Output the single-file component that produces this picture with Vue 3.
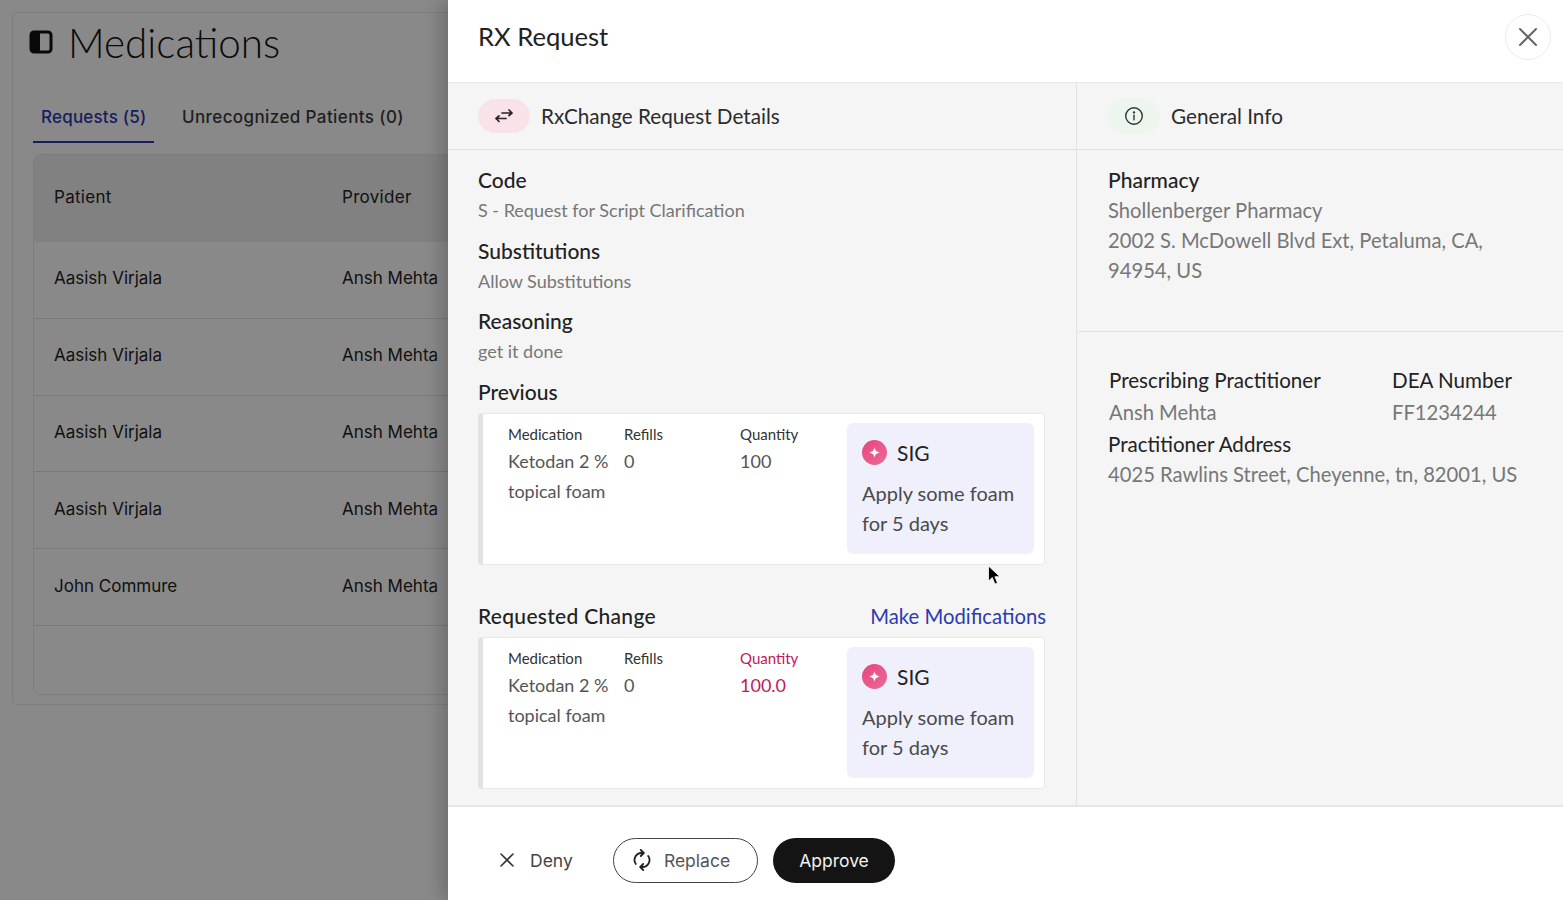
<script setup>
import { ref } from 'vue'

const patients = ref([
  { id: 1, name: 'Aasish Virjala', provider: 'Ansh Mehta' },
  { id: 2, name: 'Aasish Virjala', provider: 'Ansh Mehta' },
  { id: 3, name: 'Aasish Virjala', provider: 'Ansh Mehta' },
  { id: 4, name: 'Aasish Virjala', provider: 'Ansh Mehta' },
  { id: 5, name: 'John Commure', provider: 'Ansh Mehta' }
])

const details = [
  { label: 'Code', value: 'S - Request for Script Clarification' },
  { label: 'Substitutions', value: 'Allow Substitutions' },
  { label: 'Reasoning', value: 'get it done' }
]
</script>

<template>
  <div class="page">
    <div class="med-card">
      <div class="med-title">
        <svg class="panel-icon" width="24" height="24" viewBox="0 0 24 24">
          <rect x="2" y="2" width="20" height="20" rx="3" fill="none" stroke="#111" stroke-width="3" />
          <path d="M3 3h8v18H3z" fill="#111" />
        </svg>
        <h1>Medications</h1>
      </div>
      <div class="tabs">
        <div class="tab active">Requests (5)</div>
        <div class="tab">Unrecognized Patients (0)</div>
      </div>
      <div class="table">
        <div class="row head">
          <div class="col-patient">Patient</div>
          <div>Provider</div>
        </div>
        <div v-for="item in patients" :key="item.id" class="row">
          <div class="col-patient">{{ item.name }}</div>
          <div>{{ item.provider }}</div>
        </div>
        <div class="table-foot"></div>
      </div>
    </div>

    <div class="backdrop"></div>

    <aside class="drawer">
      <header class="drawer-head">
        <h2>RX Request</h2>
        <button class="close">
          <svg width="22" height="22" viewBox="0 0 22 22" fill="none" stroke="#666" stroke-width="2" stroke-linecap="round">
            <path d="M3 3l16 16M19 3L3 19" />
          </svg>
        </button>
      </header>

      <div class="drawer-body">
        <section class="left">
          <div class="sec-head">
            <span class="pill pink">
              <svg width="20" height="16" viewBox="0 0 20 16" fill="none" stroke="#2a2226" stroke-width="1.7" stroke-linecap="round" stroke-linejoin="round">
                <path d="M8 5h10M15 2l3 3-3 2.500M12 10.500H2M5 8l-3 2.500L5 13.500" />
              </svg>
            </span>
            <span>RxChange Request Details</span>
          </div>
          <div class="left-content">
            <div v-for="d in details" :key="d.label" class="field">
              <div class="label">{{ d.label }}</div>
              <div class="value">{{ d.value }}</div>
            </div>

            <div class="label block-label">Previous</div>
            <div class="rx-card">
              <div class="rx-col med">
                <div class="rx-label">Medication</div>
                <div class="rx-val">Ketodan 2 %</div>
                <div class="rx-val">topical foam</div>
              </div>
              <div class="rx-col">
                <div class="rx-label">Refills</div>
                <div class="rx-val">0</div>
              </div>
              <div class="rx-col qty">
                <div class="rx-label">Quantity</div>
                <div class="rx-val">100</div>
              </div>
              <div class="sig">
                <div class="sig-head">
                  <span class="sig-dot">
                    <svg width="11" height="11" viewBox="0 0 12 12"><path d="M6 0c.5 3.500 2 5.200 6 6-4 .8-5.500 2.500-6 6-.5-3.500-2-5.200-6-6 4-.8 5.500-2.500 6-6z" fill="#fff" /></svg>
                  </span>
                  SIG
                </div>
                <div class="sig-text">Apply some foam<br />for 5 days</div>
              </div>
            </div>

            <div class="change-row">
              <div class="label">Requested Change</div>
              <a class="modify" href="#">Make Modifications</a>
            </div>
            <div class="rx-card">
              <div class="rx-col med">
                <div class="rx-label">Medication</div>
                <div class="rx-val">Ketodan 2 %</div>
                <div class="rx-val">topical foam</div>
              </div>
              <div class="rx-col">
                <div class="rx-label">Refills</div>
                <div class="rx-val">0</div>
              </div>
              <div class="rx-col qty changed">
                <div class="rx-label">Quantity</div>
                <div class="rx-val">100.0</div>
              </div>
              <div class="sig">
                <div class="sig-head">
                  <span class="sig-dot">
                    <svg width="11" height="11" viewBox="0 0 12 12"><path d="M6 0c.5 3.500 2 5.200 6 6-4 .8-5.500 2.500-6 6-.5-3.500-2-5.200-6-6 4-.8 5.500-2.500 6-6z" fill="#fff" /></svg>
                  </span>
                  SIG
                </div>
                <div class="sig-text">Apply some foam<br />for 5 days</div>
              </div>
            </div>
          </div>
        </section>

        <section class="right">
          <div class="sec-head info-head">
            <span class="pill green">
              <svg width="20" height="20" viewBox="0 0 20 20" fill="none" stroke="#333" stroke-width="1.400" stroke-linecap="round">
                <circle cx="10" cy="10" r="8.300" />
                <path d="M10 9.300v4.500" />
                <circle cx="10" cy="6.400" r=".5" fill="#333" />
              </svg>
            </span>
            <span>General Info</span>
          </div>
          <div class="pharmacy">
            <div class="label">Pharmacy</div>
            <div class="info">Shollenberger Pharmacy</div>
            <div class="info">2002 S. McDowell Blvd Ext, Petaluma, CA,<br />94954, US</div>
          </div>
          <div class="practitioner">
            <div class="prac-grid">
              <div>
                <div class="label light">Prescribing Practitioner</div>
                <div class="info">Ansh Mehta</div>
              </div>
              <div>
                <div class="label light">DEA Number</div>
                <div class="info">FF1234244</div>
              </div>
            </div>
            <div class="label light addr-label">Practitioner Address</div>
            <div class="info addr">4025 Rawlins Street, Cheyenne, tn, 82001, US</div>
          </div>
        </section>
      </div>

      <footer class="drawer-foot">
        <button class="btn deny">
          <svg width="16" height="16" viewBox="0 0 16 16" fill="none" stroke="#333" stroke-width="1.600" stroke-linecap="round">
            <path d="M2 2l12 12M14 2L2 14" />
          </svg>
          Deny
        </button>
        <button class="btn replace">
          <svg width="18" height="22" viewBox="0 0 18 22" fill="none" stroke="#222" stroke-width="1.800" stroke-linecap="round" stroke-linejoin="round">
            <path d="M2.800 15A7 7 0 0 1 9 4h1M7.800 1l3 3-3 3" />
            <path d="M15.200 7A7 7 0 0 1 9 18H8M10.200 15l-3 3 3 3" />
          </svg>
          Replace
        </button>
        <button class="btn approve">Approve</button>
      </footer>

      <svg class="cursor" width="16" height="22" viewBox="0 0 16 22">
        <path d="M1.500 1v15l3.800-3.400 2.600 6.400 2.600-1.100-2.600-6.200h5z" fill="#000" stroke="#fff" stroke-width=".8" />
      </svg>
    </aside>
  </div>
</template>

<style scoped>
.page {
  position: relative;
  height: 900px;
  overflow: hidden;
  background: #fafafa;
  font-family: Lato, "Liberation Sans", sans-serif;
  color: #222;
}

/* behind the drawer */
.med-card {
  margin: 12px 0 0 12px;
  width: 700px;
  height: 693px;
  box-sizing: border-box;
  border: 1px solid #e6e6e6;
  border-radius: 4px;
  padding: 0 0 0 20px;
  font-family: Inter, sans-serif;
}
.med-title {
  display: flex;
  align-items: center;
  height: 58px;
  gap: 15px;
  margin-left: -4px;
}
.med-title h1 {
  margin: 0;
  font-family: Lato, sans-serif;
  font-weight: 300;
  font-size: 40.400px;
  color: #111;
}
.tabs {
  display: flex;
  margin-top: 21px;
  height: 51px;
  gap: 12px;
  font-size: 17px;
  font-weight: 500;
  letter-spacing: 0.4px;
  color: #3a3a3a;
}
.tab {
  padding: 15px 8px 0;
  box-sizing: border-box;
  height: 51px;
}
.tab:last-child {
  padding-left: 16px;
}
.tab.active {
  width: 121px;
  color: #2c36b0;
  border-bottom: 2px solid #2c36b0;
  white-space: nowrap;
  letter-spacing: 0.2px;
}
.table {
  margin-top: 11px;
  border: 1px solid #e2e2e2;
  border-radius: 8px;
  height: 539px;
  font-size: 17px;
  color: #222;
}
.row {
  display: flex;
  align-items: center;
  box-sizing: border-box;
  height: 76.800px;
  padding: 0 0 3px 20px;
  border-bottom: 1px solid #dcdcdc;
}
.row.head {
  height: 87px;
  background: #ececec;
  border-radius: 8px 8px 0 0;
  border-bottom: 0;
  letter-spacing: 0.3px;
}
.col-patient {
  width: 288px;
}
.backdrop {
  position: absolute;
  inset: 0;
  background: rgba(0, 0, 0, 0.45);
}

/* drawer */
.drawer {
  position: absolute;
  top: 0;
  right: 0;
  bottom: 0;
  left: 448px;
  background: #fff;
  display: flex;
  flex-direction: column;
  box-shadow: -8px 0 16px rgba(0, 0, 0, 0.18);
}
.drawer-head {
  height: 83px;
  flex: none;
  box-sizing: border-box;
  padding: 0 12px 9px 30px;
  display: flex;
  align-items: center;
  justify-content: space-between;
  border-bottom: 1px solid #e6e6e6;
}
.drawer-head h2 {
  margin: 0 0 1px;
  font-weight: 400;
  font-size: 25.600px;
  color: #222;
}
.close {
  width: 46px;
  height: 46px;
  padding: 0;
  border: 1px solid #ececec;
  border-radius: 50%;
  background: #fff;
  display: flex;
  align-items: center;
  justify-content: center;
}
.drawer-body {
  flex: 1;
  display: flex;
  background: #f5f5f5;
  border-bottom: 2px solid #e6e6e6;
  min-height: 0;
}
.left {
  width: 629px;
  flex: none;
  box-sizing: border-box;
  border-right: 1px solid #e3e3e3;
}
.right {
  flex: 1;
}
.sec-head {
  height: 67px;
  box-sizing: border-box;
  padding-left: 30px;
  display: flex;
  align-items: center;
  gap: 11px;
  font-size: 20.700px;
  color: #2c2c2c;
  border-bottom: 1px solid #e0e0e0;
}
.info-head {
  padding-left: 31px;
}
.pill {
  width: 52px;
  height: 34px;
  border-radius: 17px;
  display: flex;
  align-items: center;
  justify-content: center;
}
.pill.pink {
  background: #f9e3e9;
}
.pill.green {
  background: #edf6ec;
}
.left-content {
  padding: 15px 30px 0;
}
.field {
  margin-bottom: 10.500px;
}
.label {
  font-size: 21px;
  line-height: 30px;
  font-weight: 500;
  color: #222;
}
.label.light {
  font-size: 20.600px;
  font-weight: 400;
}
.value {
  font-size: 18px;
  line-height: 30px;
  color: #777;
}
.block-label {
  margin-bottom: 6px;
}
.rx-card {
  width: 567px;
  height: 152px;
  box-sizing: border-box;
  background: #fff;
  border: 1px solid #e8e8e8;
  border-left: 5px solid #e2e2e2;
  border-radius: 4px;
  padding: 9px 10px 10px 25px;
  display: flex;
}
.rx-col {
  width: 116px;
  flex: none;
}
.rx-col.qty {
  width: 107px;
}
.rx-label {
  font-size: 15px;
  line-height: 23px;
  color: #333;
}
.rx-val {
  font-size: 18px;
  line-height: 30px;
  color: #555;
  white-space: nowrap;
}
.changed .rx-label,
.changed .rx-val {
  color: #c2185b;
}
.sig {
  width: 187px;
  height: 131px;
  flex: none;
  box-sizing: border-box;
  background: #eff0fb;
  border-radius: 6px;
  padding: 17px 15px 0;
}
.sig-head {
  display: flex;
  align-items: center;
  gap: 10px;
  font-size: 21px;
  color: #222;
  height: 26px;
}
.sig-dot {
  width: 25px;
  height: 25px;
  border-radius: 50%;
  background: linear-gradient(135deg, #e8457c, #ec6a98);
  display: flex;
  align-items: center;
  justify-content: center;
}
.sig-text {
  margin-top: 12px;
  font-size: 20px;
  line-height: 30px;
  color: #4a4a4a;
  white-space: nowrap;
}
.change-row {
  margin-top: 36px;
  margin-bottom: 6px;
  width: 568px;
  display: flex;
  justify-content: space-between;
  align-items: center;
}
.change-row .label {
  letter-spacing: 0.3px;
}
.modify {
  font-size: 20.300px;
  color: #2c3bb0;
  text-decoration: none;
}
.pharmacy {
  height: 182px;
  box-sizing: border-box;
  padding: 15px 30px 0 31px;
  border-bottom: 1px solid #e3e3e3;
}
.info {
  font-size: 20.200px;
  line-height: 30px;
  color: #777;
}
.practitioner {
  padding: 33px 30px 0 31px;
}
.prac-grid {
  display: flex;
  margin-left: 1px;
}
.prac-grid > div:first-child {
  width: 283px;
}
.prac-grid .info {
  margin-top: 2px;
}
.addr-label {
  margin-top: 2px;
}
.addr {
  white-space: nowrap;
}
.drawer-foot {
  height: 93px;
  flex: none;
  box-sizing: border-box;
  padding: 13px 0 0 30px;
  display: flex;
  align-items: center;
  background: #fff;
}
.btn {
  height: 45px;
  border-radius: 23px;
  font-family: Inter, Lato, sans-serif;
  font-size: 17.500px;
  display: flex;
  align-items: center;
  justify-content: center;
  background: #fff;
  border: 0;
  padding: 0;
}
.deny {
  width: 135px;
  justify-content: flex-start;
  padding-left: 21px;
  gap: 15px;
  color: #444;
}
.replace {
  width: 145px;
  box-sizing: border-box;
  border: 1.500px solid #444;
  padding-right: 8px;
  gap: 13px;
  color: #555;
}
.approve {
  margin-left: 15px;
  width: 122px;
  background: #141414;
  color: #f2f2f2;
}
.cursor {
  position: absolute;
  left: 539px;
  top: 565px;
}
</style>

<style>
body {
  margin: 0;
}
</style>
